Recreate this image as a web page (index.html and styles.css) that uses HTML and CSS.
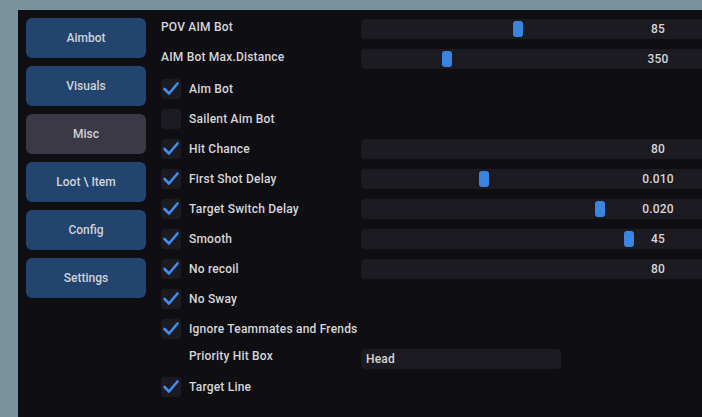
FILE: index.html
```html
<!DOCTYPE html>
<html lang="en">
<head>
  <meta charset="UTF-8">
  <title>Misc</title>
  <link rel="stylesheet" href="styles.css">
</head>
<body>

  <div class="window">
    <nav class="tabs">
      <button class="tab">Aimbot</button>
      <button class="tab">Visuals</button>
      <button class="tab active">Misc</button>
      <button class="tab">Loot \ Item</button>
      <button class="tab">Config</button>
      <button class="tab">Settings</button>
    </nav>

    <div class="options">
      <div class="row">
        <div class="label raised">POV AIM Bot</div>
        <div class="track"><span class="grab" style="left:152px"></span><span class="value">85</span></div>
      </div>
      <div class="row">
        <div class="label raised">AIM Bot Max.Distance</div>
        <div class="track"><span class="grab" style="left:81px"></span><span class="value">350</span></div>
      </div>
      <div class="row">
        <div class="label"><span class="check on"></span>Aim Bot</div>
      </div>
      <div class="row">
        <div class="label"><span class="check"></span>Sailent Aim Bot</div>
      </div>
      <div class="row">
        <div class="label"><span class="check on"></span>Hit Chance</div>
        <div class="track"><span class="value">80</span></div>
      </div>
      <div class="row">
        <div class="label"><span class="check on"></span>First Shot Delay</div>
        <div class="track"><span class="grab" style="left:118px"></span><span class="value">0.010</span></div>
      </div>
      <div class="row">
        <div class="label"><span class="check on"></span>Target Switch Delay</div>
        <div class="track"><span class="grab" style="left:234px"></span><span class="value">0.020</span></div>
      </div>
      <div class="row">
        <div class="label"><span class="check on"></span>Smooth</div>
        <div class="track"><span class="grab" style="left:263px"></span><span class="value">45</span></div>
      </div>
      <div class="row">
        <div class="label"><span class="check on"></span>No recoil</div>
        <div class="track"><span class="value">80</span></div>
      </div>
      <div class="row">
        <div class="label"><span class="check on"></span>No Sway</div>
      </div>
      <div class="row">
        <div class="label"><span class="check on"></span>Ignore Teammates and Frends</div>
      </div>
      <div class="row combo-row">
        <div class="label indent">Priority Hit Box</div>
        <div class="combo">Head</div>
      </div>
      <div class="row">
        <div class="label"><span class="check on"></span>Target Line</div>
      </div>
    </div>
  </div>

</body>
</html>
```

FILE: styles.css
```css
html, body { margin: 0; height: 100%; overflow: hidden; }
body { background: #7a939f; font-family: "Roboto", sans-serif; font-size: 12px; font-weight: 500; letter-spacing: 0.2px; color: #d6d6da; }

.window { margin: 10px 0 0 18px; height: 100%; background: #0f0e13; display: flex; padding: 8px; box-sizing: border-box; overflow: hidden; }

.tabs { display: flex; flex-direction: column; gap: 8px; width: 120px; flex-shrink: 0; }
.tab { height: 40px; border: none; border-radius: 6px; background: #22446e; color: #cfd3da; font: inherit; padding: 0; }
.tab.active { background: #3b3946; }

.options { padding: 1px 0 0 15px; }
.row { display: flex; align-items: center; height: 20px; margin-bottom: 10px; }
.label { width: 200px; flex-shrink: 0; display: flex; align-items: center; white-space: nowrap; }
.label.raised { margin-top: -5px; }
.label.indent { padding-left: 28px; box-sizing: border-box; }

.check { width: 20px; height: 20px; border-radius: 4px; background: #1c1b21; margin-right: 8px; flex-shrink: 0; }
.check.on { background: #1c1b21 url("data:image/svg+xml,%3Csvg xmlns='http://www.w3.org/2000/svg' width='20' height='20'%3E%3Cpolyline points='3.5,10 8,14.5 16.5,4.5' fill='none' stroke='%233d8ef0' stroke-width='2.6' stroke-linecap='round' stroke-linejoin='round'/%3E%3C/svg%3E") no-repeat; }

.track { position: relative; width: 594px; height: 20px; flex-shrink: 0; border-radius: 4px; background: #1c1b21; display: flex; align-items: center; justify-content: center; }
.grab { position: absolute; top: 2px; width: 10px; height: 16px; border-radius: 3px; background: #3b85e0; }

.combo-row { margin-bottom: 8px; }
.combo-row .label { margin-top: -6px; }
.combo { width: 200px; height: 20px; border-radius: 4px; background: #1c1b21; padding-left: 5px; box-sizing: border-box; display: flex; align-items: center; }
```
